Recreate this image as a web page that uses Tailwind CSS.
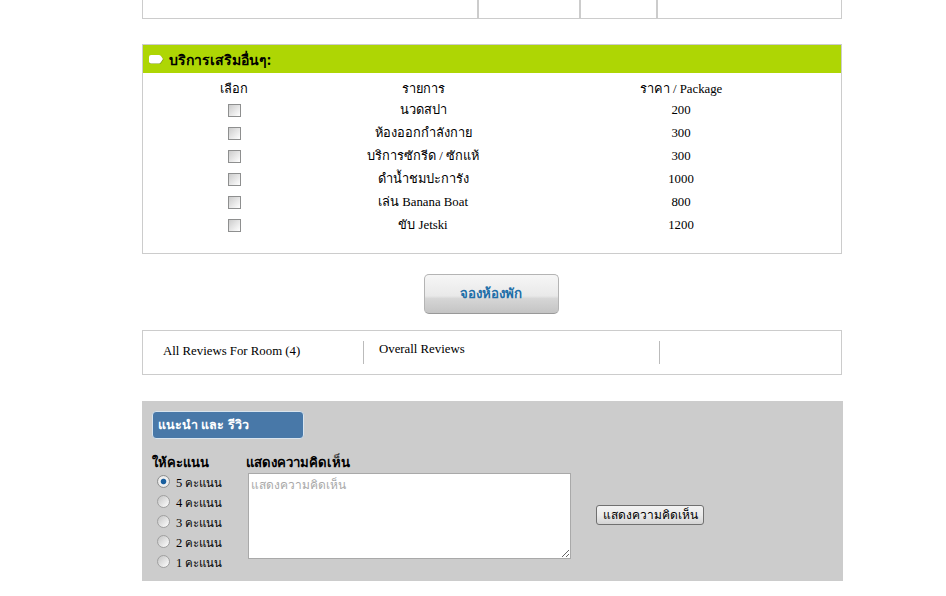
<!DOCTYPE html>
<html lang="th">
<head>
    <meta charset="UTF-8">
    <title>Room</title>
    <script src="https://cdn.jsdelivr.net/npm/@tailwindcss/browser@4"></script>
</head>
<body class="bg-white h-[596px] overflow-hidden font-['Liberation_Serif','Noto_Sans',serif] text-[12.8px] text-black">
<div class="ml-[142px] w-[700px]">

    <!-- ตารางด้านบน -->
    <div class="h-[19px] border-x border-b border-[#cccccc] flex">
        <div class="w-[334px]"></div>
        <div class="w-[102px] border-l-2 border-[#cccccc]"></div>
        <div class="w-[77px] border-l-2 border-[#cccccc]"></div>
        <div class="flex-1 border-l-2 border-[#cccccc]"></div>
    </div>

    <!-- บริการเสริม -->
    <div class="mt-[25px] h-[210px] border border-[#cccccc]">
        <div class="h-[28px] bg-[#aed604] flex items-center pl-[5px] gap-[5px]">
            <svg width="16" height="11" viewBox="0 0 16 11"><path d="M3 1.5H11.5Q12.5 1.5 13.5 2.5L15.5 5.5L13.5 8.5Q12.5 10 11.5 10H3Q1 10 1 8V3.5Q1 1.5 3 1.5Z" fill="#7f9a10"/><path d="M3 1H11Q12 1 13 2L15 5L13 8Q12 9.5 11 9.5H3Q1 9.5 1 7.5V3Q1 1 3 1Z" fill="#fff"/></svg>
            <span class="font-['Noto_Sans',sans-serif] font-bold text-[14px]">บริการเสริมอื่นๆ:</span>
        </div>
        <div class="pt-[7px] grid grid-cols-[182px_196px_320px] grid-rows-[19px] auto-rows-[23px] items-center text-center">
            <div>เลือก</div><div>รายการ</div><div>ราคา / Package</div>

            <div class="flex justify-center"><span class="size-[13px] border border-[#8e8f8f] bg-gradient-to-br from-[#cccccc] to-white"></span></div><div>นวดสปา</div><div>200</div>
            <div class="flex justify-center"><span class="size-[13px] border border-[#8e8f8f] bg-gradient-to-br from-[#cccccc] to-white"></span></div><div>ห้องออกกำลังกาย</div><div>300</div>
            <div class="flex justify-center"><span class="size-[13px] border border-[#8e8f8f] bg-gradient-to-br from-[#cccccc] to-white"></span></div><div>บริการซักรีด / ซักแห้</div><div>300</div>
            <div class="flex justify-center"><span class="size-[13px] border border-[#8e8f8f] bg-gradient-to-br from-[#cccccc] to-white"></span></div><div>ดำน้ำชมปะการัง</div><div>1000</div>
            <div class="flex justify-center"><span class="size-[13px] border border-[#8e8f8f] bg-gradient-to-br from-[#cccccc] to-white"></span></div><div>เล่น Banana Boat</div><div>800</div>
            <div class="flex justify-center"><span class="size-[13px] border border-[#8e8f8f] bg-gradient-to-br from-[#cccccc] to-white"></span></div><div>ขับ Jetski</div><div>1200</div>
        </div>
    </div>

    <!-- ปุ่มจอง -->
    <div class="mt-[20px] flex justify-center pr-[2px]">
        <button class="w-[135px] h-[40px] rounded-[5px] border border-[#b4b4b4] border-b-[#999999] bg-[linear-gradient(#f6f6f6_0%,#e9e9e9_55%,#d6d6d6_62%,#c4c4c4_100%)] font-['Noto_Sans',sans-serif] font-bold text-[13.3px] text-[#1f6fa8]">จองห้องพัก</button>
    </div>

    <!-- รีวิว -->
    <div class="mt-[16px] h-[45px] border border-[#cccccc] flex pt-[10px]">
        <div class="w-[221px] h-[23px] border-r border-[#bbbbbb] pl-[20px] leading-[20px]">All Reviews For Room (4)</div>
        <div class="w-[296px] h-[23px] border-r border-[#bbbbbb] pl-[15px] leading-[16px]">Overall Reviews</div>
    </div>

    <!-- แนะนำ และ รีวิว -->
    <div class="mt-[26px] w-[701px] h-[180px] bg-[#cccccc] pt-[10px] pl-[10px]">
        <div class="w-[152px] h-[28px] bg-[#4878a8] border border-[#d8e4ee] rounded-[4px] flex items-center pl-[5px] font-['Noto_Sans',sans-serif] font-bold text-[12.5px] text-white">แนะนำ และ รีวิว</div>
        <div class="flex mt-[13px]">
            <div class="w-[94px]">
                <div class="font-['Noto_Sans',sans-serif] font-bold text-[13px] h-[20px] leading-[20px]">ให้คะแนน</div>
                <div class="flex flex-col ml-[5px] mt-[1px] text-[12.5px]">
                    <div class="h-[20px] flex items-center gap-[6px]"><span class="size-[13px] mb-[3px] rounded-full border border-[#8e8f8f] bg-[radial-gradient(circle,#1a5f9e_0%,#1a5f9e_30%,#f2f2f2_42%,#dcdcdc_100%)]"></span><span>5 <span class="text-[11.5px]">คะแนน</span></span></div>
                    <div class="h-[20px] flex items-center gap-[6px]"><span class="size-[13px] mb-[3px] rounded-full border border-[#a0a0a0] bg-gradient-to-br from-[#c4c4c4] to-white"></span><span>4 <span class="text-[11.5px]">คะแนน</span></span></div>
                    <div class="h-[20px] flex items-center gap-[6px]"><span class="size-[13px] mb-[3px] rounded-full border border-[#a0a0a0] bg-gradient-to-br from-[#c4c4c4] to-white"></span><span>3 <span class="text-[11.5px]">คะแนน</span></span></div>
                    <div class="h-[20px] flex items-center gap-[6px]"><span class="size-[13px] mb-[3px] rounded-full border border-[#a0a0a0] bg-gradient-to-br from-[#c4c4c4] to-white"></span><span>2 <span class="text-[11.5px]">คะแนน</span></span></div>
                    <div class="h-[20px] flex items-center gap-[6px]"><span class="size-[13px] mb-[3px] rounded-full border border-[#a0a0a0] bg-gradient-to-br from-[#c4c4c4] to-white"></span><span>1 <span class="text-[11.5px]">คะแนน</span></span></div>
                </div>
            </div>
            <div>
                <div class="font-['Noto_Sans',sans-serif] font-bold text-[13.2px] h-[21px] leading-[20px]">แสดงความคิดเห็น</div>
                <textarea placeholder="แสดงความคิดเห็น" class="block ml-[2px] w-[323px] h-[86px] bg-white border border-[#a9a9a9] px-[2px] py-[2px] text-[12px] font-['Noto_Sans',sans-serif] placeholder:text-[#a9a9a9]"></textarea>
            </div>
            <div class="ml-[25px] mt-[53px]">
                <button class="h-[20px] w-[108px] rounded-[3px] border border-[#707070] bg-[linear-gradient(#f2f2f2,#ebebeb_50%,#d4d4d4)] font-['Noto_Sans',sans-serif] text-[12px] leading-[16px]">แสดงความคิดเห็น</button>
            </div>
        </div>
    </div>

</div>
</body>
</html>
